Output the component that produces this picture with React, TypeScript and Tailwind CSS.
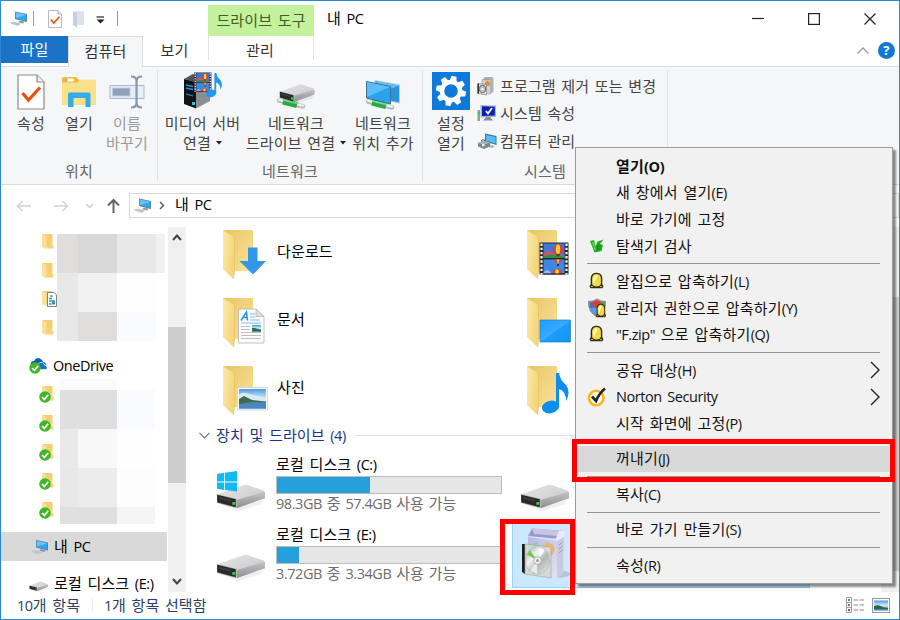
import type { ReactNode } from "react"

/* ---------- text ---------- */

// Latin runs are set a touch narrower than the Hangul around them
function Text({ children }: { children: string }) {
  const parts = children.split(/([A-Za-z0-9.():"?]+)/)
  return (
    <span className="whitespace-pre">
      {parts.map((part, i) =>
        i % 2 === 1 ? (
          <span key={i} className="text-[14.5px] tracking-[-0.45px]">
            {part}
          </span>
        ) : (
          part
        ),
      )}
    </span>
  )
}

/* ---------- icons ---------- */

function ComputerIcon({ w = 19, h = 16 }: { w?: number; h?: number }) {
  return (
    <svg width={w} height={h} viewBox="0 0 19 16" className="shrink-0">
      <path d="M6 1 L18 3.5 V11.5 L6 8.5 Z" fill="#5a7f98" />
      <path d="M6.8 2 L17.2 4.2 V10.4 L6.8 7.7 Z" fill="#2fa8f2" />
      <path d="M6.8 2 L17.2 4.2 L6.8 7.7 Z" fill="#66c4fb" />
      <path d="M11 10 L16 11.3 L14 13 L9 11.7 Z" fill="#8b9aa5" />
      <path d="M0 12.2 L5 11 L12.5 13.3 L8 15.4 Z" fill="#ccd5dc" />
      <path d="M2 12.4 L9.5 14.4 M4.5 11.7 L11 13.8" stroke="#9eabb5" strokeWidth="0.5" />
    </svg>
  )
}

function CheckPageIcon({ w, h }: { w: number; h: number }) {
  return (
    <svg width={w} height={h} viewBox="0 0 28 36" className="shrink-0">
      <path d="M1 1 H20 L27 8 V35 H1 Z" fill="#fdfdfd" stroke="#8c8c8c" strokeWidth="1.2" />
      <path d="M20 1 V8 H27" fill="#eee" stroke="#8c8c8c" strokeWidth="1.2" />
      <path d="M5.5 19 L11.5 26 L23 13.5" fill="none" stroke="#e9500e" strokeWidth="3.2" />
    </svg>
  )
}

function FolderShape() {
  return (
    <>
      <path d="M2 1 H31 V42 H12 Z" fill="url(#folderBack)" />
      <path d="M1 1 L12.5 7.5 V43 L11.5 50 L1 40 Z" fill="url(#folderFront)" />
      <path d="M1 1 L12.5 7.5 V43 L11.5 50" fill="none" stroke="#e2bd5c" strokeWidth="0.6" />
    </>
  )
}

function Gradients() {
  return (
    <svg width="0" height="0" className="absolute">
      <defs>
        <linearGradient id="folderBack" x1="0" y1="0" x2="1" y2="1">
          <stop offset="0" stopColor="#e9c566" />
          <stop offset="1" stopColor="#fbe39a" />
        </linearGradient>
        <linearGradient id="folderFront" x1="0" y1="0" x2="1" y2="0.4">
          <stop offset="0" stopColor="#fdeaa9" />
          <stop offset="1" stopColor="#f4d57c" />
        </linearGradient>
        <linearGradient id="driveTop" x1="0" y1="0" x2="1" y2="0.6">
          <stop offset="0" stopColor="#e6e6e7" />
          <stop offset="1" stopColor="#cfcfd1" />
        </linearGradient>
        <linearGradient id="driveSide" x1="0" y1="0" x2="0" y2="1">
          <stop offset="0" stopColor="#c3c3c5" />
          <stop offset="1" stopColor="#8f8f92" />
        </linearGradient>
        <linearGradient id="sky" x1="0" y1="0" x2="0" y2="1">
          <stop offset="0" stopColor="#4d9be0" />
          <stop offset="0.5" stopColor="#d5ecf8" />
          <stop offset="0.75" stopColor="#6fa3c8" />
          <stop offset="1" stopColor="#3673b1" />
        </linearGradient>
        <linearGradient id="screen" x1="0" y1="0" x2="1" y2="1">
          <stop offset="0" stopColor="#1c9cff" />
          <stop offset="0.5" stopColor="#39aaff" />
          <stop offset="0.52" stopColor="#1c9cff" />
          <stop offset="1" stopColor="#1593f5" />
        </linearGradient>
        <linearGradient id="boxFront" x1="0" y1="0" x2="1" y2="1">
          <stop offset="0" stopColor="#b9b6e2" />
          <stop offset="1" stopColor="#e3e2f3" />
        </linearGradient>
        <linearGradient id="disc" x1="0" y1="0" x2="1" y2="1">
          <stop offset="0" stopColor="#9fa09f" />
          <stop offset="0.35" stopColor="#f5f5f5" />
          <stop offset="0.6" stopColor="#b4b4b4" />
          <stop offset="1" stopColor="#f0f0f0" />
        </linearGradient>
      </defs>
    </svg>
  )
}

function FilmArt() {
  return (
    <g>
      <rect x="0" y="0" width="29" height="32" fill="#28282b" />
      <rect x="4" y="1" width="21" height="14.5" fill="#3b78d8" />
      <rect x="4" y="17" width="21" height="14" fill="#3f86e6" />
      <path d="M4 11 L8 8 L14 10 L17 12 H25 V15.5 H4 Z" fill="#c9566e" />
      <path d="M4 14 Q12 10 25 14 V15.5 H4 Z" fill="#2f9248" />
      <ellipse cx="18.5" cy="6.8" rx="4.8" ry="4.8" fill="#e8392b" />
      <ellipse cx="18.5" cy="6.8" rx="2.2" ry="4.8" fill="#ffd22e" />
      <path d="M16.8 11.5 H20.2 L19.6 14 H17.4 Z" fill="#6e3513" />
      <path d="M14.5 17 H22.5 L19.5 21 H17.5 Z" fill="#e33b28" />
      <path d="M17.3 17 H19.8 L19 20.8 H18 Z" fill="#ffd22e" />
      <rect x="17.5" y="21.5" width="2" height="2" fill="#4a2a12" />
      <ellipse cx="17.5" cy="29.4" rx="4.6" ry="2.6" fill="#e33b28" />
      <ellipse cx="17.5" cy="29.4" rx="2" ry="2.6" fill="#ffd22e" />
      <path d="M4 30 Q8 25 12 31 H4 Z" fill="#8fc2f5" />
      <path d="M4 31.5 H25" stroke="#28282b" />
      <path d="M2 1 V32 M27 1 V32" stroke="#f3f3f3" strokeWidth="2.2" strokeDasharray="2.4 1.8" />
    </g>
  )
}

function NoteArt({ fill = "#0c8df0" }: { fill?: string }) {
  return (
    <g fill={fill}>
      <ellipse cx="8.5" cy="34" rx="8.7" ry="6.3" transform="rotate(-14 8.5 34)" />
      <path d="M14 0 H17 Q18 7 24 12 Q29 19 24 28 Q24 18 17 16 V34 H14 Z" />
    </g>
  )
}

function LibraryIcon({ kind }: { kind: string }) {
  return (
    <svg width="50" height="52" viewBox="0 0 50 52" className="shrink-0">
      <FolderShape />
      {kind === "down" && <path d="M26 18.5 H35.5 V32 H44 L31 45.500 L17.5 32 H26 Z" fill="#3396e8" />}
      {kind === "doc" && (
        <g>
          <path d="M16.5 12 H34 L42 19.5 V46 H16.5 Z" fill="#fcfcfc" stroke="#b4b4b4" strokeWidth="0.8" />
          <path d="M34 12 V19.5 H42 Z" fill="#dedede" stroke="#aaa" strokeWidth="0.6" />
          <path d="M19 23.5 L24.5 15 L25.5 23.5 M21.2 20.5 H25.3" fill="none" stroke="#2a96d4" strokeWidth="1.5" />
          <path d="M28 17 H33 M28 20 H33 M28 23 H38 M19 26 H39" stroke="#6dbbe6" strokeWidth="0.9" />
          <path d="M19 29.5 H28 M19 32.5 H28 M19 35.5 H39 M19 38.5 H39 M19 41.5 H39" stroke="#b9b9b9" strokeWidth="0.9" />
          <rect x="30" y="28" width="9" height="6.5" fill="url(#sky)" />
          <path d="M30 31 L33 31 L39 33 V34.5 H30 Z" fill="#2b6b46" />
        </g>
      )}
      {kind === "photo" && (
        <g>
          <rect x="15.5" y="22.5" width="30" height="22.5" fill="#fff" stroke="#c9cfd4" strokeWidth="0.8" />
          <rect x="17" y="24" width="27" height="19.5" fill="url(#sky)" />
          <path d="M17 30 Q20 27 24 28 T32 30 T44 33 V37 H17 Z" fill="#d8e9f4" />
          <path d="M17 34 L22 31 L30 35 L44 36.5 V38.5 L17 40 Z" fill="#3f6b4b" />
          <path d="M17 39 L30 37 L44 37.5 V43.5 H17 Z" fill="#4a86c0" />
        </g>
      )}
      {kind === "video" && (
        <g transform="translate(13.5 13.5)">
          <FilmArt />
        </g>
      )}
      {kind === "desktop" && <path d="M14 23 H44.500 V45 H14 Z" fill="url(#screen)" stroke="#1b7fca" strokeWidth="0.7" />}
      {kind === "music" && (
        <g transform="translate(16 8)">
          <NoteArt />
        </g>
      )}
    </svg>
  )
}

function SmallFolder({ badge }: { badge?: "check" | "doc" }) {
  return (
    <svg width="20" height="18" viewBox="0 0 20 18" className="shrink-0">
      <path d="M4 1 H13.5 V14 H7 Z" fill="#f2cf72" />
      <path d="M3 1 L7.5 3 V16.8 L3 13.5 Z" fill="#fbe09a" />
      <path d="M7.5 12 H14.5 V15.5 H7.5 Z" fill="#f3d379" />
      <rect x="12.5" y="8.5" width="1" height="4" fill="#fbe8b5" />
      {badge === "check" && (
        <g>
          <circle cx="6" cy="12" r="5.8" fill="#3fb828" />
          <path d="M3 12 L5.4 14.4 L9.2 9.8" fill="none" stroke="#fff" strokeWidth="1.7" />
        </g>
      )}
      {badge === "doc" && (
        <g>
          <path d="M8.5 2.5 H15 L17.5 5 V16.5 H8.5 Z" fill="#fff" stroke="#777" strokeWidth="0.9" />
          <path d="M10 8.5 H13 M11 6 H13.5 M10 11 H16 M10 14 H12.5" fill="none" stroke="#2a96d4" strokeWidth="1.6" />
          <rect x="13" y="11.5" width="3" height="3" fill="#3a8f9c" />
        </g>
      )}
    </svg>
  )
}

function DriveArt() {
  return (
    <g>
      <path d="M2 21 L22 26 L48 17 L46 22 L22 30 Z" fill="#000" opacity="0.06" />
      <path d="M1 12 L28 2 Q30 1.5 32 2 L48 8 Q50 9 48 10.5 L21 17.5 Z" fill="url(#driveTop)" />
      <path d="M21 17.5 L49.5 9.2 V16 L21 26.5 Z" fill="url(#driveSide)" />
      <path d="M0.8 11.6 L21 16.5 V26.5 L1 21 Z" fill="#b1b1b3" />
      <path d="M1.2 12.3 L20 17 V25.6 L1.2 20.2 Z" fill="#29292b" />
      <path d="M3 14.5 L15 17.5 V19.5 L3 16.5 Z" fill="#3f3f42" />
      <rect x="16.5" y="20" width="3" height="3" fill="#35d233" />
    </g>
  )
}

function DriveIcon({ windows = false }: { windows?: boolean }) {
  return (
    <svg width="52" height="42" viewBox="0 0 52 42" className="shrink-0">
      <g transform="translate(0 12) scale(0.99 0.95)">
        <DriveArt />
      </g>
      {windows && (
        <path
          d="M1 3 L8.2 1.8 V10.6 H1 Z M9 1.7 L21 0 V10.6 H9 Z M1 11.4 H8.2 V19 L1 17.8 Z M9 11.4 H21 V20.5 L9 19 Z"
          fill="#12baf2"
        />
      )}
    </svg>
  )
}

function SoftwareIcon() {
  return (
    <svg width="50" height="54" viewBox="0 0 50 54">
      <ellipse cx="35" cy="47" rx="14" ry="4" fill="#7f99b5" opacity="0.4" />
      <path d="M7 9 L11 1.5 L44 4 L39 12 Z" fill="#9d95cb" />
      <path d="M11 1.5 L44 4 L42 9.5 L13 7 Z" fill="#c9c4e6" />
      <path d="M7 9 L34 14 L38 3.5 L44 4 L43 10 L36 15 Z" fill="#eceaf7" />
      <path d="M7 10 L36 14 V52 L7 46 Z" fill="url(#boxFront)" />
      <path d="M36 14 L43 10 L42 46 L36 52 Z" fill="#c9cae2" />
      <path d="M38 18 L41.5 15 M38 22 L41.5 19 M38 26 L41.5 23" stroke="#8f93ba" strokeWidth="0.8" />
      <circle cx="27" cy="22.5" r="6.8" fill="#f0b571" />
      <circle cx="27" cy="22.5" r="2.8" fill="#e7e3ef" />
      <path d="M9 19 L16 14 L20 23 Z" fill="#a6c2bd" />
      <path d="M1 17 L4 17 V47 L1 45 Z" fill="#1c1c1e" />
      <path d="M4 17 L30 20 V51 L4 47 Z" fill="#cfdcd5" opacity="0.85" stroke="#9aa8a1" strokeWidth="0.7" />
      <ellipse cx="16.5" cy="33.5" rx="12" ry="13.7" fill="url(#disc)" stroke="#a5a7a6" strokeWidth="0.5" />
      <path d="M16.5 33.5 L6 27.5 Q7 25 9 23.5 Z" fill="#6cd044" />
      <path d="M16.5 33.5 L19 20.5 L24 23 Z" fill="#fff" opacity="0.8" />
      <path d="M16.5 33.5 L9 44 L16 47 Z" fill="#fff" opacity="0.7" />
      <circle cx="16.5" cy="33.5" r="3.8" fill="#eef0ef" stroke="#a2a2a2" strokeWidth="0.8" />
      <circle cx="16.5" cy="33.5" r="1.5" fill="#8fa19a" />
    </svg>
  )
}

function ExplorerIcon() {
  return (
    <svg width="36" height="36" viewBox="0 0 36 36">
      <path d="M1 5 Q1 3 3 3 H15 L18 6 V10 H1 Z" fill="#f5b92b" />
      <rect x="4" y="4.5" width="9" height="3" rx="1" fill="#fff" />
      <rect x="4" y="4.5" width="2.5" height="3" fill="#86b8d8" />
      <path d="M1 8.5 H16 L19 5.5 H35 V31 H1 Z" fill="#fbe08a" />
      <path d="M7 33 V20 Q7 18.5 9 18.5 H28 Q29.5 18.5 29.5 20 V33 H24.5 V25 Q24.5 24 23 24 H14 Q12.5 24 12.5 25 V33 Z" fill="#31aee8" />
    </svg>
  )
}

function RenameIcon() {
  return (
    <svg width="36" height="36" viewBox="0 0 36 36">
      <rect x="1" y="11.5" width="34" height="13" fill="#e7eef8" stroke="#a9b8d2" />
      <rect x="3.5" y="14" width="17.5" height="8" fill="#8fa0be" stroke="#c0cbe0" />
      <path
        d="M22 2.5 Q27.5 2.5 27.5 7 V29 Q27.5 33.5 22 33.5 M33 2.5 Q27.5 2.5 27.5 7 M27.5 29 Q27.5 33.5 33 33.5"
        fill="none"
        stroke="#8696b4"
        strokeWidth="2.2"
      />
    </svg>
  )
}

function MediaServerIcon() {
  return (
    <svg width="40" height="38" viewBox="0 0 40 38">
      <path d="M1 7 L10 2 L27 7 L13 10 Z" fill="#515458" />
      <path d="M1 7 L13 10 V36.5 L1 32 Z" fill="#101214" />
      <path d="M13 10 L27 7 V29 L13 36.5 Z" fill="#8a8d92" />
      <path d="M3 13 L10 14.5 M3 16 L10 17.5 M3 22 L10 24" stroke="#2593de" strokeWidth="1.3" />
      <rect x="9" y="30" width="3" height="3" fill="#23c9e8" />
      <g transform="translate(11 0.5) scale(0.6)">
        <FilmArt />
      </g>
      <g transform="translate(23 1) scale(0.6)">
        <NoteArt fill="#2196f0" />
      </g>
    </svg>
  )
}

function CableArt() {
  return (
    <g>
      <path d="M1 1.5 L25 7.5" stroke="#b8bcbd" strokeWidth="4.5" strokeLinecap="round" />
      <path d="M1 0.8 L25 6.8" stroke="#f2f4f4" strokeWidth="2" strokeLinecap="round" />
      <path d="M5 2.5 L19 6" stroke="#27a847" strokeWidth="6" />
      <path d="M5 0.8 L19 4.3" stroke="#7bdd86" strokeWidth="2" />
    </g>
  )
}

function NetworkDriveIcon() {
  return (
    <svg width="40" height="30" viewBox="0 0 40 30">
      <g transform="translate(2 19)">
        <CableArt />
      </g>
      <g transform="translate(3 3) scale(0.72)">
        <DriveArt />
      </g>
    </svg>
  )
}

function NetworkPlaceIcon() {
  return (
    <svg width="36" height="32" viewBox="0 0 36 32">
      <path d="M10 2.5 L34.5 7 V25 L10 20 Z" fill="#2b95dc" stroke="#b5cfdc" />
      <path d="M10.5 3 L34 7.5 L20 13 Z" fill="#63bff6" />
      <g transform="translate(2 22)">
        <CableArt />
      </g>
      <path d="M1.5 3.5 L25.5 8.5 V26 L1.5 20 Z" fill="#2ba2ee" stroke="#426f8b" />
      <path d="M2 4 L25 9 L2 19 Z" fill="#5dbdf8" />
    </svg>
  )
}

function GearIcon() {
  const teeth = [0, 45, 90, 135, 180, 225, 270, 315]
  return (
    <svg width="38" height="38" viewBox="0 0 38 38">
      <rect width="38" height="38" fill="#0f79db" />
      <g transform="translate(19 19)">
        {teeth.map((angle) => (
          <path key={angle} d="M-3.8 -9 L-2.4 -15 H2.4 L3.8 -9 Z" fill="#fff" transform={`rotate(${angle + 12})`} />
        ))}
        <circle r="9" fill="none" stroke="#fff" strokeWidth="4.4" />
      </g>
    </svg>
  )
}

function ProgramsIcon() {
  return (
    <svg width="20" height="20" viewBox="0 0 20 20">
      <path d="M5 4 L8 1 H16 L14 4 Z" fill="#aaa9ad" />
      <path d="M5 4 H13.5 V18 L5 17 Z" fill="#d4d4d8" stroke="#9b9b9f" strokeWidth="0.6" />
      <path d="M13.5 4 L16.5 1.5 V15.5 L13.5 18 Z" fill="#aeb0b6" />
      <circle cx="10.5" cy="7.5" r="2.6" fill="#f08a24" />
      <path d="M1 7.5 L9.5 8.5 V19 L1 17.5 Z" fill="#e6ebe9" stroke="#87898a" strokeWidth="0.8" />
      <path d="M1.2 7.5 V17.5" stroke="#222" strokeWidth="1.4" />
      <ellipse cx="5.5" cy="13" rx="3.3" ry="3.8" fill="#bbb" stroke="#555" strokeWidth="0.8" />
      <circle cx="5.5" cy="13" r="1.2" fill="#fff" />
    </svg>
  )
}

function SystemIcon() {
  return (
    <svg width="20" height="20" viewBox="0 0 20 20">
      <path d="M3.5 2 L19 2.5 V14 L3.5 14.5 Z" fill="#aeb3c8" />
      <path d="M5 3.3 L17.8 3.8 V12.5 L5 13 Z" fill="#0b1fb5" />
      <path d="M9 8 L11 10.5 L15 5" fill="none" stroke="#fff" strokeWidth="1.7" />
      <path d="M9 14 H13 L16 17.5 H6 Z" fill="#8d8d98" />
      <rect x="0.5" y="7" width="2.5" height="11" fill="#9a9aa2" />
      <rect x="0.8" y="9" width="2" height="3" fill="#42c93f" />
    </svg>
  )
}

function ManageIcon() {
  return (
    <svg width="20" height="20" viewBox="0 0 20 20">
      <path d="M8 2.5 L19.5 5 V14 L8 10.5 Z" fill="#287fae" />
      <path d="M9 4 L18.5 6 V12.5 L9 9.5 Z" fill="#55bdf2" />
      <path d="M10 13 L18 15 L15 17 L8 15 Z" fill="#a9b6bf" />
      <path d="M1 12 L7 9.5 L13 11.5 V15.5 L7 18 L1 15.5 Z" fill="#7c868e" />
      <path d="M1 12 L7 9.5 L13 11.5 L7 13.8 Z" fill="#a9b0b6" />
      <path d="M4 9.8 Q6 7.5 9 10" fill="none" stroke="#59636b" />
      <rect x="5" y="12.8" width="2.5" height="2.5" fill="#e7eaec" />
    </svg>
  )
}

function OneDriveIcon() {
  return (
    <svg width="20" height="17" viewBox="0 0 20 17" className="shrink-0">
      <path d="M2 8 Q1 4 5 4 Q7 0 11 1.5 Q13.5 2.5 14 5 Q17 5 17 8 Z" fill="#0f5fb8" />
      <path d="M6 12.5 Q4 8 9 7.5 Q10 4.5 13.5 5.5 Q15.5 6.5 15.5 8 Q18.5 8 18 12.5 Z" fill="#1473d2" stroke="#fff" strokeWidth="0.7" />
      <circle cx="6" cy="11" r="5.7" fill="#3fb828" />
      <path d="M3 11 L5.4 13.3 L9.2 8.8" fill="none" stroke="#fff" strokeWidth="1.7" />
    </svg>
  )
}

function EggArt() {
  return (
    <g>
      <path d="M1 14.5 L2.2 12 V5.5 Q3 0.8 8 0.8 Q13 0.8 13.800 5.5 V12 L15 14.5 L14 16.2 H2 Z" fill="#2f2c18" />
      <path d="M3.6 12 V6 Q4.200 2 8 2 Q11.900 2 12.400 6 V11.500 Q12 14.400 8 14.400 Q4.300 14.400 3.6 12 Z" fill="#f2da45" />
      <path d="M4.5 9 Q4.500 3.200 8 3.200 Q10 4 7.500 7 Q6 9 6.500 12 Q4.800 11 4.500 9 Z" fill="#fffab8" />
      <path d="M2.300 14.600 H4.500 M11.500 14.600 H13.700" stroke="#d9bb2d" strokeWidth="1" />
    </g>
  )
}

function EggIcon() {
  return (
    <svg width="17" height="17" viewBox="0 0 16 17" className="mr-[2px] mb-[3px]">
      <EggArt />
    </svg>
  )
}

function ShieldEggIcon() {
  return (
    <svg width="20" height="20" viewBox="0 0 20 20" className="mr-[1px]">
      <path d="M1 3 Q6 3 10 0.5 Q14 3 19 3 Q20 14 10 19.5 Q0 14 1 3 Z" fill="#8c8f95" />
      <path d="M2.5 4.5 Q7 4 10 2.5 V10 H2.8 Z" fill="#3b78cd" />
      <path d="M10 2.5 Q13 4.5 17.5 4.5 V10 H10 Z" fill="#40a342" />
      <path d="M5 4 Q7.5 3.8 10 2.2 Q12 3.8 14 4.1 L12 9 H6 Z" fill="#df3b31" />
      <path d="M3 10 H10 V18 Q4 15 3 10 Z" fill="#5c98d9" />
      <g transform="translate(8 5) scale(0.74 0.88)">
        <EggArt />
      </g>
    </svg>
  )
}

function V3Icon() {
  return (
    <svg width="16" height="16" viewBox="0 0 16 16" className="mr-[1px]">
      <path d="M1 3 L5 2 L6.5 8 L8.5 3.5 L14.5 1.5 L11 6 L14 7 L12.5 13 L5.5 14.5 Z" fill="#1fae26" />
      <path d="M3.5 4 L6.5 12" stroke="#6de34e" strokeWidth="1.2" />
      <path d="M8 13 L9.3 5.5 M9.5 8.3 H12 M8.8 11 H11.5" stroke="#0d7a18" strokeWidth="0.9" />
    </svg>
  )
}

function NortonIcon() {
  return (
    <svg width="20" height="20" viewBox="0 0 20 20">
      <circle cx="9.2" cy="11" r="7.3" fill="#fff" stroke="#f8b617" strokeWidth="2.6" />
      <path d="M5 9.5 L9 14 Q12 6.5 18 1.5" fill="none" stroke="#222" strokeWidth="2.7" />
    </svg>
  )
}

function Caret() {
  return (
    <svg width="6" height="4" viewBox="0 0 6 4" className="inline-block shrink-0">
      <path d="M0 0 H6 L3 3.5 Z" fill="#222" />
    </svg>
  )
}

/* ---------- title bar & tabs ---------- */

function TitleBar() {
  return (
    <div className="flex h-[35px] shrink-0">
      <div className="flex w-[207px] items-center pl-[8px]">
        <ComputerIcon w={19} h={17} />
        <span className="ml-[5px] h-[15px] w-px bg-[#999]" />
        <span className="ml-[13px]">
          <CheckPageIcon w={16} h={18} />
        </span>
        <svg width="14" height="18" viewBox="0 0 14 18" className="ml-[9px]">
          <path d="M3 1 H12 V15 H5 Z" fill="#dbe3ee" />
          <path d="M1 1 L5 3 V17.5 L1 15 Z" fill="#c3d0e2" />
        </svg>
        <svg width="9" height="8" viewBox="0 0 9 8" className="mt-[3px] ml-[10px]">
          <path d="M0.5 1 H8" stroke="#333" strokeWidth="1.3" />
          <path d="M0.5 3.5 H8.5 L4.5 7.5 Z" fill="#222" />
        </svg>
        <span className="ml-[12px] h-[15px] w-px bg-[#999]" />
      </div>
      <div className="flex h-[31px] w-[106px] items-center justify-center self-end bg-[#c3f19c] pb-[1px] text-[#3f5c2d]">
        <Text>드라이브 도구</Text>
      </div>
      <div className="ml-[13px] flex-1 pt-[7px] text-black">
        <Text>내 PC</Text>
      </div>
      <div className="flex items-center gap-[44px] pr-[23px]">
        <svg width="12" height="12" viewBox="0 0 12 12">
          <path d="M0 5.500 H12" stroke="#222" strokeWidth="1.2" />
        </svg>
        <svg width="12" height="12" viewBox="0 0 12 12">
          <rect x="0.6" y="0.6" width="10.8" height="10.8" fill="none" stroke="#222" strokeWidth="1.2" />
        </svg>
        <svg width="12" height="12" viewBox="0 0 12 12">
          <path d="M0.5 0.5 L11.5 11.5 M11.5 0.5 L0.5 11.5" stroke="#222" strokeWidth="1.2" />
        </svg>
      </div>
    </div>
  )
}

function TabRow() {
  return (
    <div className="flex h-[31px] shrink-0 border-b border-[#dadbdc] text-[#333]">
      <div className="flex h-[27px] w-[67px] items-center justify-center bg-[#1a73c7] pb-[1px] text-white">파일</div>
      <div className="-mb-px flex h-[31px] w-[75px] items-center justify-center border-x border-t border-[#dadbdc] bg-[#f5f6f7] pb-[3px]">
        컴퓨터
      </div>
      <div className="flex w-[63px] items-center justify-center pb-[2px]">보기</div>
      <div className="ml-[2px] flex h-[24px] w-[106px] items-center justify-center border-x border-[#e1e1e1] pt-[4px] pr-[2px]">관리</div>
      <div className="flex flex-1 items-center justify-end gap-[9px] pr-[4px] pb-[2px]">
        <svg width="12" height="7" viewBox="0 0 12 7">
          <path d="M0.5 6.5 L6 1 L11.5 6.5" fill="none" stroke="#999" strokeWidth="1.3" />
        </svg>
        <span className="flex h-[17px] w-[17px] items-center justify-center rounded-full bg-[#0f78d4] text-[13px] leading-none font-bold text-white">
          ?
        </span>
      </div>
    </div>
  )
}

/* ---------- ribbon ---------- */

type BigButtonProps = { icon: ReactNode; lines: string[]; width: string; muted?: boolean; caret?: boolean }

function BigButton({ icon, lines, width, muted, caret }: BigButtonProps) {
  return (
    <div className={`flex shrink-0 flex-col items-center ${width} ${muted ? "text-[#9b9b9b]" : "text-[#444]"}`}>
      <div className="flex h-[41px] items-end justify-center pb-[1px]">{icon}</div>
      <div className="mt-[3px] text-center leading-[19.5px] whitespace-nowrap">
        {lines.map((line, i) => (
          <div key={line} className="flex items-center justify-center gap-[5px]">
            <Text>{line}</Text>
            {caret && i === lines.length - 1 && <Caret />}
          </div>
        ))}
      </div>
    </div>
  )
}

function GroupLabel({ children }: { children: ReactNode }) {
  return <div className="mt-auto text-center text-[#666]">{children}</div>
}

function Ribbon() {
  const system = [
    { icon: <ProgramsIcon />, text: "프로그램 제거 또는 변경" },
    { icon: <SystemIcon />, text: "시스템 속성" },
    { icon: <ManageIcon />, text: "컴퓨터 관리" },
  ]
  return (
    <div className="flex h-[118px] shrink-0 border-b border-[#dadbdc] bg-[#f5f6f7] py-[3px]">
      <div className="flex w-[157px] flex-col border-r border-[#e2e3e4]">
        <div className="flex pl-[6px]">
          <BigButton width="w-[48px]" icon={<CheckPageIcon w={28} h={36} />} lines={["속성"]} />
          <BigButton width="w-[48px]" icon={<ExplorerIcon />} lines={["열기"]} />
          <BigButton width="w-[48px]" icon={<RenameIcon />} lines={["이름", "바꾸기"]} muted />
        </div>
        <GroupLabel>위치</GroupLabel>
      </div>
      <div className="flex w-[265px] flex-col border-r border-[#e2e3e4]">
        <div className="flex pl-[5px]">
          <BigButton width="w-[79px]" icon={<MediaServerIcon />} lines={["미디어 서버", "연결"]} caret />
          <BigButton width="w-[108px]" icon={<NetworkDriveIcon />} lines={["네트워크", "드라이브 연결"]} caret />
          <BigButton width="w-[66px]" icon={<NetworkPlaceIcon />} lines={["네트워크", "위치 추가"]} />
        </div>
        <GroupLabel>네트워크</GroupLabel>
      </div>
      <div className="flex w-[245px] flex-col border-r border-[#e2e3e4]">
        <div className="flex pl-[6px]">
          <BigButton width="w-[44px]" icon={<GearIcon />} lines={["설정", "열기"]} />
          <div className="ml-[4px] flex flex-col pt-[2px] text-[#444]">
            {system.map((item) => (
              <div key={item.text} className="flex h-[27.5px] items-center gap-[3px]">
                {item.icon}
                <Text>{item.text}</Text>
              </div>
            ))}
          </div>
        </div>
        <GroupLabel>시스템</GroupLabel>
      </div>
    </div>
  )
}

/* ---------- address bar ---------- */

function AddressBar() {
  return (
    <div className="flex h-[42px] shrink-0 items-center pl-[15px]">
      <svg width="105" height="20" viewBox="0 0 105 20" fill="none" className="shrink-0">
        <path d="M15 10 H1.5 M6.5 5 L1.5 10 L6.5 15" stroke="#d4d4d4" strokeWidth="1.5" />
        <path d="M38 10 H51.5 M46.5 5 L51.5 10 L46.5 15" stroke="#d4d4d4" strokeWidth="1.5" />
        <path d="M70 8 L73.5 11.5 L77 8" stroke="#cfcfcf" strokeWidth="1.5" />
        <path d="M97.5 17 V4 M92 9.5 L97.5 4 L103 9.5" stroke="#666" strokeWidth="2" />
      </svg>
      <div className="mb-[2px] ml-[8px] flex h-[25px] flex-1 items-center border border-[#d9d9d9] pl-[3px] text-black">
        <ComputerIcon w={19} h={17} />
        <svg width="6" height="9" viewBox="0 0 6 9" className="ml-[7px]">
          <path d="M1 1 L4.5 4.5 L1 8" fill="none" stroke="#555" strokeWidth="1.4" />
        </svg>
        <span className="ml-[10px] pb-[1px]">
          <Text>내 PC</Text>
        </span>
      </div>
    </div>
  )
}

/* ---------- navigation pane ---------- */

function TopMosaic() {
  return (
    <div className="ml-[-5px] grid h-[107px] w-[108px] grid-cols-[21px_39px_39px_9px] grid-rows-[39px_39px_29px]">
      <i className="bg-[#dfdedd]" />
      <i className="bg-[#d8d8d8]" />
      <i className="bg-[#e8e8e8]" />
      <i className="bg-[#f0f0f0]" />
      <i className="bg-[#e8e8e8]" />
      <i className="bg-[#f2f2f2]" />
      <i className="bg-[#fefefe]" />
      <i className="bg-white" />
      <i className="bg-[#e8e8e8]" />
      <i className="bg-[#dfdedd]" />
      <i className="bg-[#f9fbfe]" />
      <i className="bg-white" />
    </div>
  )
}

function BottomMosaic() {
  return (
    <div className="mt-[-1px] grid h-[145px] w-[95px] grid-cols-[18px_39px_38px] grid-rows-[11px_39px_39px_39px_17px]">
      <i className="bg-[#fafafb]" />
      <i className="bg-[#fafafb]" />
      <i className="bg-white" />
      <i className="bg-[#e0dfe0]" />
      <i className="bg-[#dfdedf]" />
      <i className="bg-[#fafbfe]" />
      <i className="bg-[#e9e9e9]" />
      <i className="bg-[#f8f8f8]" />
      <i className="bg-[#fefefe]" />
      <i className="bg-[#e8e8e8]" />
      <i className="bg-[#ececec]" />
      <i className="bg-[#fdfdfe]" />
      <i className="bg-[#e1e0e1]" />
      <i className="bg-[#e0dfe0]" />
      <i className="bg-[#f5f5f7]" />
    </div>
  )
}

function Sidebar() {
  return (
    <div className="flex w-[167px] shrink-0 flex-col text-black">
      <div className="flex h-[115px] shrink-0 pl-[38px]">
        <div className="flex w-[23px] flex-col pt-[1px]">
          {[0, 1, 2, 3].map((n) => (
            <div key={n} className="relative z-10 flex h-[28.6px] items-center">
              <SmallFolder badge={n === 2 ? "doc" : undefined} />
            </div>
          ))}
        </div>
        <div className="pt-[7px]">
          <TopMosaic />
        </div>
      </div>
      <div className="mt-[9px] flex h-[28px] shrink-0 items-center gap-[4px] pl-[28px]">
        <OneDriveIcon />
        <Text>OneDrive</Text>
      </div>
      <div className="mt-px flex h-[145px] shrink-0 pl-[38px]">
        <div className="flex w-[21px] flex-col">
          {[0, 1, 2, 3, 4].map((n) => (
            <div key={n} className="flex h-[28.8px] items-center">
              <SmallFolder badge="check" />
            </div>
          ))}
        </div>
        <BottomMosaic />
      </div>
      <div className="mt-[7px] flex h-[29px] w-[166px] shrink-0 items-center gap-[5px] bg-[#d9d9d9] pl-[29px]">
        <ComputerIcon />
        <Text>내 PC</Text>
      </div>
      <div className="mt-[12px] flex h-[20px] shrink-0 items-center gap-[5px] pl-[28px]">
        <svg width="20" height="11" viewBox="0 0 52 29" className="mt-[6px] shrink-0">
          <DriveArt />
        </svg>
        <Text>로컬 디스크 (E:)</Text>
      </div>
    </div>
  )
}

function SidebarScroll() {
  return (
    <div className="flex w-[18px] shrink-0 flex-col items-center justify-between bg-[#f0f0f0]">
      <div className="flex h-[100px] items-start pt-[7px]">
        <svg width="10" height="7" viewBox="0 0 10 7">
          <path d="M1 6 L5 1.5 L9 6" fill="none" stroke="#444" strokeWidth="2" />
        </svg>
      </div>
      <div className="h-[156px] w-full bg-[#cdcdcd]" />
      <div className="flex h-[109px] items-end pb-[7px]">
        <svg width="10" height="7" viewBox="0 0 10 7">
          <path d="M1 1 L5 5.5 L9 1" fill="none" stroke="#444" strokeWidth="2" />
        </svg>
      </div>
    </div>
  )
}

/* ---------- file area ---------- */

function Drive({ name, used, info, windows }: { name: string; used: number; info: string; windows?: boolean }) {
  return (
    <div className="flex h-[69.5px] w-[304px] shrink-0">
      <div className="flex w-[60px] pt-[16px]">
        <DriveIcon windows={windows} />
      </div>
      <div className="flex w-[226px] flex-col">
        <div className="h-[21px] leading-[19px] text-black">
          <Text>{name}</Text>
        </div>
        <div className="h-[18px] border border-[#bcbcbc] bg-[#e6e6e6]">
          <div className="h-full bg-[#26a0da]" style={{ width: `${used}%` }} />
        </div>
        <div className="leading-[18px] tracking-normal text-[#6d6d6d] [word-spacing:1px]">
          <Text>{info}</Text>
        </div>
      </div>
    </div>
  )
}

function Content() {
  const rows = [
    { kind: "down", name: "다운로드", side: "video" },
    { kind: "doc", name: "문서", side: "desktop" },
    { kind: "photo", name: "사진", side: "music" },
  ]
  return (
    <div className="flex flex-1 flex-col overflow-hidden">
      <div className="flex flex-col pt-[2px] pl-[36px]">
        {rows.map((row) => (
          <div key={row.kind} className="flex h-[67.8px]">
            <div className="flex w-[304px]">
              <LibraryIcon kind={row.kind} />
              <span className="ml-[5px] pt-[12px] text-black">{row.name}</span>
            </div>
            <LibraryIcon kind={row.side} />
          </div>
        ))}
      </div>
      <div className="mt-[-9px] flex h-[24px] shrink-0 items-center pl-[13px] text-[#1e3287]">
        <svg width="11" height="7" viewBox="0 0 11 7">
          <path d="M0.5 0.8 L5.5 5.8 L10.5 0.8" fill="none" stroke="#777" strokeWidth="1.2" />
        </svg>
        <span className="ml-[6px]">
          <Text>장치 및 드라이브 (4)</Text>
        </span>
        <span className="ml-[8px] h-px flex-1 bg-[#e2e2e2]" />
      </div>
      <div className="mt-[8px] flex h-[69.5px] shrink-0 pl-[30px]">
        <Drive name="로컬 디스크 (C:)" used={41.5} info="98.3GB 중 57.4GB 사용 가능" windows />
        <div className="pt-[16px]">
          <DriveIcon />
        </div>
      </div>
      <div className="flex shrink-0 pl-[30px]">
        <div className="w-[296px]">
          <Drive name="로컬 디스크 (E:)" used={10} info="3.72GB 중 3.34GB 사용 가능" />
        </div>
        <div className="mt-[-3px] h-[66px] w-[298px] border border-[#99d1ff] bg-[#cce8ff] pt-[4px] pl-[8px]">
          <SoftwareIcon />
        </div>
      </div>
    </div>
  )
}

function ContentScroll() {
  return (
    <div className="flex w-[18px] shrink-0 flex-col bg-[#f0f0f0] pt-[70px]">
      <div className="h-[274px] w-full bg-[#cdcdcd]" />
    </div>
  )
}

function StatusBar() {
  return (
    <div className="flex h-[26px] shrink-0 items-center pl-[16px] text-[#2b3f66]">
      <Text>10개 항목</Text>
      <span className="ml-[12px] h-[14px] w-px bg-[#eee]" />
      <span className="ml-[11px] flex-1">
        <Text>1개 항목 선택함</Text>
      </span>
      <svg width="18" height="16" viewBox="0 0 18 16">
        <path d="M0.5 0.5 H5.5 V15.5 H0.5 Z M0.5 5.5 H5.5 M0.5 10.5 H5.5" fill="#fff" stroke="#9b9b9b" />
        <path d="M7.5 3 H12 M13.5 3 H18 M7.5 8 H12 M13.5 8 H18 M7.5 13 H12 M13.5 13 H18" stroke="#888" />
        <rect x="2" y="2" width="2" height="2" fill="#4d8f8a" />
        <rect x="2" y="7" width="2" height="2" fill="#83773b" />
        <rect x="2" y="12" width="2" height="2" fill="#d23a2a" />
      </svg>
      <svg width="18" height="15" viewBox="0 0 18 15" className="mr-[9px] ml-[8px]">
        <rect x="0.5" y="0.5" width="17" height="14" fill="#fff" stroke="#8b9bab" />
        <rect x="2" y="2.5" width="14" height="10" fill="url(#sky)" />
        <path d="M2 8 L6 7 L12 9.5 L16 10 V11 H2 Z" fill="#2c6845" />
      </svg>
    </div>
  )
}

/* ---------- context menu ---------- */

type MenuItemProps = { label: string; icon?: ReactNode; bold?: boolean; arrow?: boolean; active?: boolean }

function MenuItem({ label, icon, bold, arrow, active }: MenuItemProps) {
  return (
    <div className={`flex h-[26.6px] shrink-0 items-center ${active ? "bg-[#d8d8d8]" : ""}`}>
      <span className="flex w-[38px] justify-center">{icon}</span>
      <span className={`flex-1 ${bold ? "font-bold" : ""}`}>
        <Text>{label}</Text>
      </span>
      {arrow && (
        <svg width="11" height="18" viewBox="0 0 11 18" className="mr-[9px]">
          <path d="M1 1 L9 9 L1 17" fill="none" stroke="#222" strokeWidth="1.4" />
        </svg>
      )}
    </div>
  )
}

function Separator() {
  return (
    <div className="flex h-[8.9px] shrink-0 items-center pr-[10px] pl-[9px]">
      <span className="h-px w-full bg-[#949494]" />
    </div>
  )
}

function ContextMenu() {
  return (
    <div className="absolute top-[146px] left-[574px] flex h-[437px] w-[318px] flex-col border border-[#9c9c9c] bg-[#f1f1f1] px-[2px] pt-[5px] tracking-[0.25px] text-[#111] shadow-[3px_3px_2px_rgba(0,0,0,0.45)]">
      <MenuItem label="열기(O)" bold />
      <MenuItem label="새 창에서 열기(E)" />
      <MenuItem label="바로 가기에 고정" />
      <MenuItem label="탐색기 검사" icon={<V3Icon />} />
      <Separator />
      <MenuItem label="알집으로 압축하기(L)" icon={<EggIcon />} />
      <MenuItem label="관리자 권한으로 압축하기(Y)" icon={<ShieldEggIcon />} />
      <MenuItem label={'"F.zip" 으로 압축하기(Q)'} icon={<EggIcon />} />
      <Separator />
      <MenuItem label="공유 대상(H)" arrow />
      <MenuItem label="Norton Security" icon={<NortonIcon />} arrow />
      <MenuItem label="시작 화면에 고정(P)" />
      <Separator />
      <MenuItem label="꺼내기(J)" active />
      <Separator />
      <MenuItem label="복사(C)" />
      <Separator />
      <MenuItem label="바로 가기 만들기(S)" />
      <Separator />
      <MenuItem label="속성(R)" />
    </div>
  )
}

export default function App() {
  return (
    <div className="relative flex h-[620px] w-[900px] flex-col overflow-hidden border border-[#2b86d3] bg-white font-['Open_Sans','Noto_Sans_CJK_KR',sans-serif] text-[15px] leading-[20px] tracking-[0.15px] [word-spacing:1.5px]">
      <Gradients />
      <TitleBar />
      <TabRow />
      <Ribbon />
      <AddressBar />
      <div className="flex h-[365px] shrink-0">
        <Sidebar />
        <SidebarScroll />
        <Content />
        <ContentScroll />
      </div>
      <StatusBar />
      <ContextMenu />
      {/* callouts around the drive and the eject command */}
      <div className="absolute top-[518px] left-[499px] h-[76px] w-[75px] border-[5px] border-[#fe0000]" />
      <div className="absolute top-[438px] left-[571px] h-[43px] w-[323px] border-[5px] border-[#fe0000]" />
    </div>
  )
}
